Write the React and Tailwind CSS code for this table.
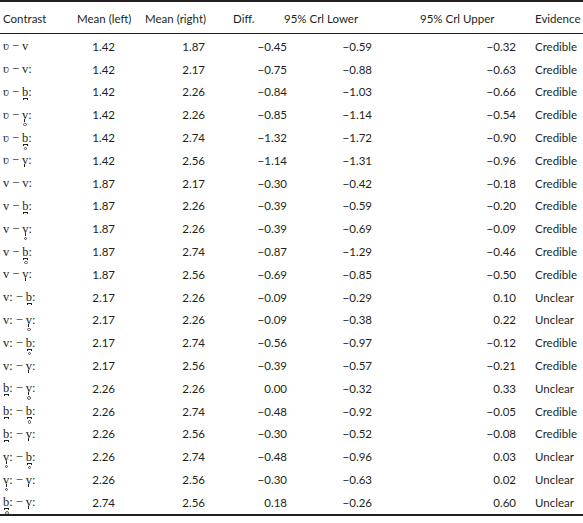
import React from "react";

const V = { ch: "\u028B" };
const v = { ch: "v" };
const vL = { ch: "v", long: true };
const bL = { ch: "b", long: true, tack: true };
const vR = { ch: "v", long: true, tack: true, ring: true };
const bR = { ch: "b", long: true, tack: true, ring: true };
const vT = { ch: "v", long: true, tack: true };

const rows = [
  [V, v, "1.42", "1.87", "\u22120.45", "\u22120.59", "\u22120.32", "Credible"],
  [V, vL, "1.42", "2.17", "\u22120.75", "\u22120.88", "\u22120.63", "Credible"],
  [V, bL, "1.42", "2.26", "\u22120.84", "\u22121.03", "\u22120.66", "Credible"],
  [V, vR, "1.42", "2.26", "\u22120.85", "\u22121.14", "\u22120.54", "Credible"],
  [V, bR, "1.42", "2.74", "\u22121.32", "\u22121.72", "\u22120.90", "Credible"],
  [V, vT, "1.42", "2.56", "\u22121.14", "\u22121.31", "\u22120.96", "Credible"],
  [v, vL, "1.87", "2.17", "\u22120.30", "\u22120.42", "\u22120.18", "Credible"],
  [v, bL, "1.87", "2.26", "\u22120.39", "\u22120.59", "\u22120.20", "Credible"],
  [v, vR, "1.87", "2.26", "\u22120.39", "\u22120.69", "\u22120.09", "Credible"],
  [v, bR, "1.87", "2.74", "\u22120.87", "\u22121.29", "\u22120.46", "Credible"],
  [v, vT, "1.87", "2.56", "\u22120.69", "\u22120.85", "\u22120.50", "Credible"],
  [vL, bL, "2.17", "2.26", "\u22120.09", "\u22120.29", "0.10", "Unclear"],
  [vL, vR, "2.17", "2.26", "\u22120.09", "\u22120.38", "0.22", "Unclear"],
  [vL, bR, "2.17", "2.74", "\u22120.56", "\u22120.97", "\u22120.12", "Credible"],
  [vL, vT, "2.17", "2.56", "\u22120.39", "\u22120.57", "\u22120.21", "Credible"],
  [bL, vR, "2.26", "2.26", "0.00", "\u22120.32", "0.33", "Unclear"],
  [bL, bR, "2.26", "2.74", "\u22120.48", "\u22120.92", "\u22120.05", "Credible"],
  [bL, vT, "2.26", "2.56", "\u22120.30", "\u22120.52", "\u22120.08", "Credible"],
  [vR, bR, "2.26", "2.74", "\u22120.48", "\u22120.96", "0.03", "Unclear"],
  [vR, vT, "2.26", "2.56", "\u22120.30", "\u22120.63", "0.02", "Unclear"],
  [bR, vT, "2.74", "2.56", "0.18", "\u22120.26", "0.60", "Unclear"],
];

function Sym({ s }) {
  return (
    <span className="inline-flex items-baseline">
      <span className="relative inline-block">
        {s.ch}
        {s.tack && s.ch === "b" && (
          <span className="absolute left-[1px] top-[14px] w-[5px] h-[2px] border-l border-r border-t border-[#231f20]" />
        )}
        {s.tack && s.ch === "v" && (
          <span className="absolute left-[2.5px] top-[12px] w-[1px] h-[3px] bg-[#231f20]" />
        )}
        {s.ring && (
          <span
            className={
              "absolute w-[3.5px] h-[3.5px] rounded-full border border-[#231f20]/70 " +
              (s.ch === "b" ? "left-[2px] top-[17px]" : "left-[1.5px] top-[16px]")
            }
          />
        )}
      </span>
      {s.long && <span>:</span>}
    </span>
  );
}

const sans = { fontFamily: "Lato, 'Open Sans', sans-serif" };

export default function App() {
  return (
    <div className="w-[583px] h-[523px] bg-white text-[#231f20]" style={sans}>
      <div className="border-t-2 border-b-2 border-[#231f20]">
        <div className="flex h-[32px] pt-[2px] items-center text-[11.5px] border-b border-[#231f20]">
          <div className="w-[77px] pl-[3px]">Contrast</div>
          <div className="w-[68px]">Mean (left)</div>
          <div className="w-[88px]">Mean (right)</div>
          <div className="w-[51px]">Diff.</div>
          <div className="w-[136px]">95% Crl Lower</div>
          <div className="w-[115px]">95% Crl Upper</div>
          <div>Evidence</div>
        </div>
        <div className="pt-[1px]">
          {rows.map((r, i) => (
            <div key={i} className="flex h-[22.8px] items-center text-[11.5px]">
              <div
                className="w-[65px] pl-[3px] text-[12.5px] leading-[16px] whitespace-nowrap flex items-baseline"
                style={{ fontFamily: "'Liberation Serif', serif" }}
              >
                <Sym s={r[0]} />
                <span className="px-[3px]">{"\u2212"}</span>
                <Sym s={r[1]} />
              </div>
              <div className="w-[50px] text-right">{r[2]}</div>
              <div className="w-[90px] text-right">{r[3]}</div>
              <div className="w-[82px] text-right">{r[4]}</div>
              <div className="w-[85px] text-right">{r[5]}</div>
              <div className="w-[144px] text-right">{r[6]}</div>
              <div className="w-[19px]" />
              <div>{r[7]}</div>
            </div>
          ))}
        </div>
      </div>
    </div>
  );
}
